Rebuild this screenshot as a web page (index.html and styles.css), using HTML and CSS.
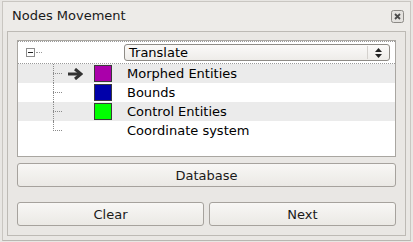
FILE: index.html
```html
<!DOCTYPE html>
<html lang="en">
<head>
    <meta charset="UTF-8">
    <meta name="viewport" content="width=device-width, initial-scale=1.0">
    <title>Nodes Movement</title>
    <link rel="stylesheet" href="styles.css">
</head>
<body>
    <div class="window">
        <div class="titlebar">
            <span class="title">Nodes Movement</span>
            <span class="close">
                <svg width="13" height="13" viewBox="0 0 13 13">
                    <rect x="0.5" y="0.5" width="12" height="12" rx="2" fill="#e4e2df" stroke="#8d8a86"/>
                    <path d="M4 4 L9 9 M9 4 L4 9" stroke="#4a4a4a" stroke-width="1.8"/>
                </svg>
            </span>
        </div>

        <div class="panel">
            <div class="tree">
                <div class="row root">
                    <span class="expander"></span>
                    <span class="expander-dots"></span>
                    <div class="combo">
                        <span>Translate</span>
                        <span class="combo-arrows">
                            <svg width="9" height="12" viewBox="0 0 9 12">
                                <path d="M4.5 1 L8 5 L1 5 Z M4.5 11 L8 7 L1 7 Z" fill="#222"/>
                            </svg>
                        </span>
                    </div>
                </div>
                <div class="row child alt">
                    <span class="branch"></span>
                    <span class="marker">
                        <svg width="16" height="12" viewBox="0 0 16 12">
                            <path d="M1 6 H13" stroke="#333" stroke-width="3"/>
                            <path d="M8 1 L14 6 L8 11" fill="none" stroke="#333" stroke-width="3"/>
                        </svg>
                    </span>
                    <span class="swatch" style="background: #aa00aa;"></span>
                    <span class="label">Morphed Entities</span>
                </div>
                <div class="row child">
                    <span class="branch"></span>
                    <span class="marker"></span>
                    <span class="swatch" style="background: #0000aa;"></span>
                    <span class="label">Bounds</span>
                </div>
                <div class="row child alt">
                    <span class="branch"></span>
                    <span class="marker"></span>
                    <span class="swatch" style="background: #00ff00;"></span>
                    <span class="label">Control Entities</span>
                </div>
                <div class="row child last">
                    <span class="branch"></span>
                    <span class="marker"></span>
                    <span class="swatch empty"></span>
                    <span class="label">Coordinate system</span>
                </div>
            </div>

            <button class="btn database">Database</button>

            <div class="btn-row">
                <button class="btn">Clear</button>
                <button class="btn">Next</button>
            </div>
        </div>
    </div>
</body>
</html>
```

FILE: styles.css
```css
body { margin: 0; background: #e8e6e3; font-family: "DejaVu Sans", Verdana, sans-serif; font-size: 13px; color: #000; }
.window { margin: 1px 2px 0 2px; width: 407px; height: 238px; border: 1px solid #c9c6c1; border-bottom-color: #b9b6b1; background: #e9e7e4; }

.titlebar { height: 29px; display: flex; align-items: center; justify-content: space-between; padding: 0 6px 2px 9px; background: #edebe8; box-sizing: border-box; }
.title { font-size: 13px; color: #1a1a1a; }
.close { display: flex; margin-top: 1px; }

.panel { margin: 0 4px; border: 1px solid #bdbab5; padding: 8px 9px 9px 9px; display: flex; flex-direction: column; }

.tree { height: 115px; border: 1px solid #a9a6a1; background: #fff; }
.row { display: flex; align-items: center; height: 19px; }
.row.alt { background: #ebebeb; }

.root { height: 19px; padding: 1px 0; border: 1px dotted #9a9a9a; border-left: none; border-right: none; }
.expander { width: 7px; height: 7px; margin-left: 8px; border: 1px solid #8c8c8c; position: relative; background: #fff; }
.expander::after { content: ""; position: absolute; left: 1px; right: 1px; top: 3px; border-top: 1px solid #222; }
.expander-dots { width: 6px; margin-left: 1px; border-top: 1px dotted #999; }

.combo { margin-left: 82px; width: 260px; height: 15px; display: flex; align-items: center; justify-content: space-between; border: 1px solid #8e8b86; border-radius: 3px; background: linear-gradient(#fbfaf9, #eeece9); padding-left: 4px; }
.combo-arrows { display: flex; align-items: center; height: 13px; padding: 0 6px; border-left: 1px solid #d4d1cd; }

.branch { width: 10px; height: 100%; margin-left: 35px; position: relative; }
.branch::before { content: ""; position: absolute; left: 0; top: 0; bottom: 0; border-left: 1px dotted #8a8a8a; }
.branch::after { content: ""; position: absolute; left: 0; top: 9px; width: 9px; border-top: 1px dotted #8a8a8a; }
.last .branch::before { bottom: 9px; }

.marker { width: 16px; margin-left: 4px; display: flex; }
.swatch { width: 16px; height: 15px; margin-left: 11px; border: 1px solid #3a3a3a; }
.swatch.empty { border-color: transparent; }
.label { margin-left: 15px; }

.btn { font-family: "DejaVu Sans", Verdana, sans-serif; font-size: 13px; color: #1a1a1a; height: 24px; padding: 0; border: 1px solid #a6a29d; border-radius: 3px; background: linear-gradient(#f8f7f5, #ebe9e5); }
.database { margin-top: 6px; }
.btn-row { margin-top: 15px; display: flex; gap: 5px; }
.btn-row .btn { flex: 1; }
```
